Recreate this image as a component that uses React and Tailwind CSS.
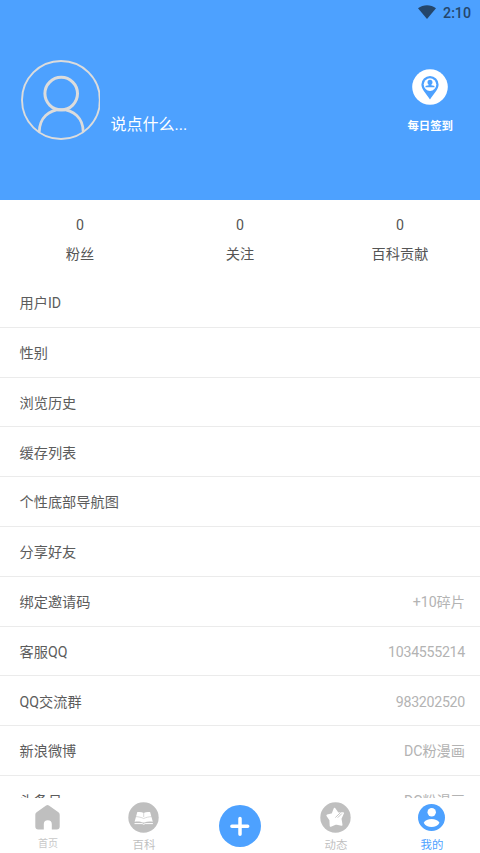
import React from 'react';

const stats = [
  { label: '粉丝', value: 0 },
  { label: '关注', value: 0 },
  { label: '百科贡献', value: 0 },
];

const rows = [
  { label: '用户ID' },
  { label: '性别' },
  { label: '浏览历史' },
  { label: '缓存列表' },
  { label: '个性底部导航图' },
  { label: '分享好友' },
  { label: '绑定邀请码', value: '+10碎片' },
  { label: '客服QQ', value: '1034555214', numeric: true },
  { label: 'QQ交流群', value: '983202520', numeric: true },
  { label: '新浪微博', value: 'DC粉漫画' },
  { label: '头条号', value: 'DC粉漫画' },
];

const WifiIcon = () => (
  <svg className="w-[18px] h-[14px]" viewBox="0 0 18 14" fill="#24466b">
    <path d="M0 3.200C5.200-.9 12.800-.9 18 3.200L9 14z" />
  </svg>
);

// The right side of the ring is flattened by the edge of the box
const Avatar = () => (
  <svg className="w-20 h-20 shrink-0" viewBox="0 0 80 80" fill="none" stroke="#dcdcdc">
    <circle cx="41" cy="40" r="39" strokeWidth="1.900" />
    <path d="M79.400 34v12" strokeWidth="1.200" />
    <circle cx="41.200" cy="33.600" r="16.300" strokeWidth="3" />
    <path d="M19.300 72C19.300 58 29 49.600 41.200 49.600S63.200 58 63.200 72" strokeWidth="2.700" />
  </svg>
);

const CheckInIcon = () => (
  <svg className="w-9 h-9" viewBox="0 0 36 36">
    <circle cx="18" cy="18" r="17.800" fill="#fff" />
    <path d="M18 7a8.600 8.600 0 0 0-8.600 8.600C9.400 20.500 14 24.500 18 30.500c4-6 8.600-10 8.600-14.900A8.600 8.600 0 0 0 18 7z" fill="#4da1ff" />
    <circle cx="18" cy="15.600" r="6.300" fill="#fff" />
    <path d="M18 10.800c-1.700 0-2.500 1.100-2.500 2.400 0 1.100.5 2 1.200 2.500v.5l-2.500.6c-.6.2-.8.600-.8 1.500h9.200c0-.9-.2-1.300-.8-1.500l-2.500-.6v-.5c.7-.5 1.200-1.400 1.200-2.500 0-1.300-.8-2.400-2.500-2.400z" fill="#4da1ff" />
  </svg>
);

const HomeIcon = () => (
  <svg className="w-[25px] h-[25px]" viewBox="0 0 25 25" fill="#bfbfbf">
    <path d="M11.100.6a2.300 2.300 0 0 1 2.800 0l9.500 6.700A3 3 0 0 1 24.700 9.700V21.500a3 3 0 0 1-3 3h-4.900v-5.300a4 4 0 0 0-8 0v5.300H3.300a3 3 0 0 1-3-3V9.700a3 3 0 0 1 1.300-2.400z" />
  </svg>
);

const BookIcon = () => (
  <svg className="w-[31px] h-[31px]" viewBox="0 0 31 31">
    <circle cx="15.500" cy="15.500" r="15.200" fill="#bfbfbf" />
    <path d="M9.300 10.100c2.400-.4 4.600-.2 6.400.9 1.800-1.100 4-1.300 6.400-.9l2.700 9.600c-3.500-.5-6.300-.2-8.300.9h-1.600c-2-1.100-4.800-1.400-8.300-.9z" fill="#fff" />
    <path d="M15.700 11v4M7.500 14.600c3.300.2 6 .8 8.200 1.900 2.200-1.100 4.900-1.700 8.200-1.900" fill="none" stroke="#bfbfbf" strokeWidth=".6" />
    <path d="M6.500 21.600h7.700l1.500.7 1.500-.7h7.700" fill="none" stroke="#fff" strokeWidth="1" />
  </svg>
);

const PlusIcon = () => (
  <svg className="w-[42px] h-[42px]" viewBox="0 0 42 42">
    <circle cx="21" cy="21" r="21" fill="#4da1ff" />
    <path d="M21 13.400v15.800M12.900 21.200h15.800" stroke="#fff" strokeWidth="3.500" strokeLinecap="round" />
  </svg>
);

const StarIcon = () => (
  <svg className="w-[31px] h-[31px]" viewBox="0 0 31 31">
    <circle cx="15.500" cy="15.500" r="15.200" fill="#bfbfbf" />
    <path
      d="M14.600 6.700l3.200 4.600 5.300-.2-2.500 5.500 1 6.200-5.700-1.200-5.300 2.200-.3-5.900-3-4.500 5.200-1.400z"
      fill="#fff"
      stroke="#fff"
      strokeWidth="1.800"
      strokeLinejoin="round"
    />
    <path d="M15.600 15.300l4.700-4.500M18 15.400l3.600-3.600" stroke="#bfbfbf" strokeWidth=".9" strokeLinecap="round" />
  </svg>
);

const MeIcon = () => (
  <svg className="w-[27px] h-[27px]" viewBox="0 0 27 27">
    <circle cx="13.500" cy="13.500" r="13.500" fill="#4da1ff" />
    <circle cx="13.700" cy="8.300" r="4.200" fill="#fff" />
    <path d="M5.700 18.700c1.500-2.500 4.500-3.700 7.900-3.700s6.400 1.200 7.900 3.700c-1.500 2.900-4.600 4.400-7.900 4.400s-6.400-1.500-7.900-4.400z" fill="#fff" />
  </svg>
);

const NavItem = ({ icon, label, className }) => (
  <div className="w-24 flex flex-col items-center">
    <div className="h-10 pr-px pb-px flex items-center justify-center">{icon}</div>
    <span className={className}>{label}</span>
  </div>
);

const Header = () => (
  <header className="h-[200px] shrink-0 bg-[#4da1ff] flex flex-col">
    <div className="h-[26px] pr-[9px] flex items-center justify-end gap-[7px] text-[#24466b]">
      <div className="pb-0.5"><WifiIcon /></div>
      <span className="text-[14.200px] leading-6 font-medium">2:10</span>
    </div>
    <div className="flex items-start justify-between pt-[34px] pl-5 pr-[27px]">
      <div className="flex items-end">
        <Avatar />
        <span className="ml-[10.500px] mb-[3px] text-base leading-6 text-white">说点什么...</span>
      </div>
      <div className="flex flex-col items-center pt-[9px]">
        <CheckInIcon />
        <span className="mt-[13px] text-[11.400px] leading-4 font-bold text-white">每日签到</span>
      </div>
    </div>
  </header>
);

const App = () => (
  <div className="w-[480px] h-[853px] overflow-hidden flex flex-col bg-white font-['Roboto','Noto_Sans_CJK_SC',sans-serif] text-[14.200px] text-[#5c5c5c]">
    <Header />
    <div className="h-[78px] shrink-0 grid grid-cols-3 pt-[14px] text-center text-[#555]">
      {stats.map((s) => (
        <div key={s.label}>
          <p className="leading-[22px]">{s.value}</p>
          <p className="mt-[7px] leading-[22px]">{s.label}</p>
        </div>
      ))}
    </div>
    <div className="flex-1 min-h-0 overflow-hidden">
      {rows.map((row) => (
        <div key={row.label} className="h-[49.800px] pt-[3px] pl-[19.500px] pr-[15px] flex items-center justify-between border-b border-[#ebebeb]">
          <span>{row.label}</span>
          <span className={row.numeric ? 'text-[#b3b3b3] tracking-[-0.28px]' : 'text-[#b3b3b3]'}>{row.value}</span>
        </div>
      ))}
    </div>
    <nav className="h-[55px] shrink-0 flex bg-white">
      <NavItem icon={<HomeIcon />} label="首页" className="text-[10px] leading-3 text-[#c8c8c8]" />
      <NavItem icon={<BookIcon />} label="百科" className="text-[11.400px] leading-[14px] text-[#bfbfbf]" />
      <div className="w-24 flex items-center justify-center"><PlusIcon /></div>
      <NavItem icon={<StarIcon />} label="动态" className="text-[11.400px] leading-[14px] text-[#bfbfbf]" />
      <NavItem icon={<MeIcon />} label="我的" className="text-[11.400px] leading-[14px] text-[#4da1ff]" />
    </nav>
  </div>
);

export default App;
